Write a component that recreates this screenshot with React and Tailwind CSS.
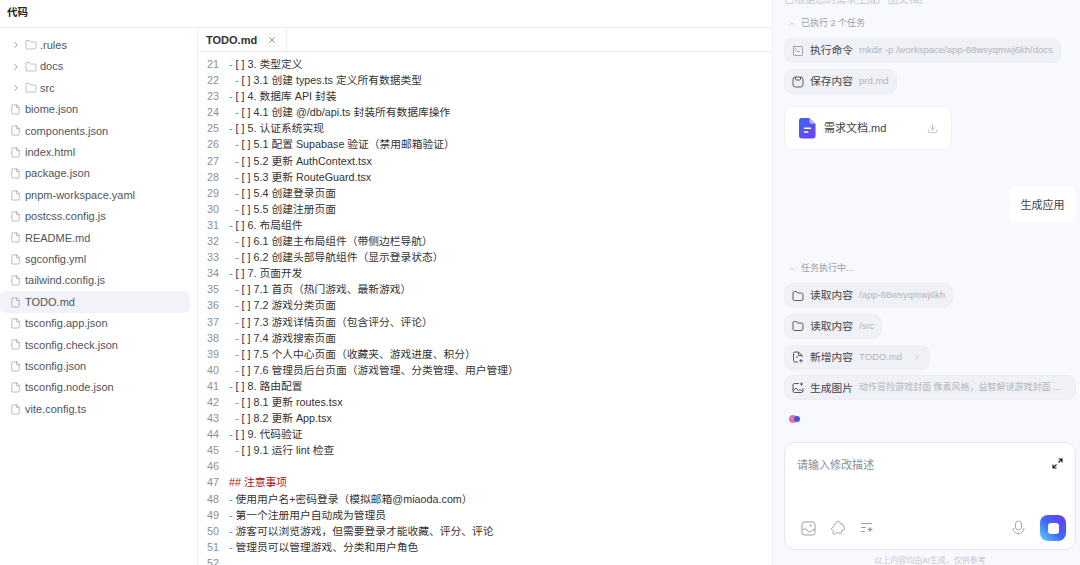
import React from 'react';
import { ChevronRight, ChevronUp, Folder, File, X, Download, SquareTerminal } from 'lucide-react';

const FONT = { fontFamily: '"Liberation Sans", "Noto Sans CJK SC", sans-serif' };

const folders = ['.rules', 'docs', 'src'];
const files = ['biome.json', 'components.json', 'index.html', 'package.json', 'pnpm-workspace.yaml', 'postcss.config.js', 'README.md', 'sgconfig.yml', 'tailwind.config.js', 'TODO.md', 'tsconfig.app.json', 'tsconfig.check.json', 'tsconfig.json', 'tsconfig.node.json', 'vite.config.ts'];

const lines = [
  [21, 1, '[ ] 3. 类型定义'],
  [22, 2, '[ ] 3.1 创建 types.ts 定义所有数据类型'],
  [23, 1, '[ ] 4. 数据库 API 封装'],
  [24, 2, '[ ] 4.1 创建 @/db/api.ts 封装所有数据库操作'],
  [25, 1, '[ ] 5. 认证系统实现'],
  [26, 2, '[ ] 5.1 配置 Supabase 验证（禁用邮箱验证）'],
  [27, 2, '[ ] 5.2 更新 AuthContext.tsx'],
  [28, 2, '[ ] 5.3 更新 RouteGuard.tsx'],
  [29, 2, '[ ] 5.4 创建登录页面'],
  [30, 2, '[ ] 5.5 创建注册页面'],
  [31, 1, '[ ] 6. 布局组件'],
  [32, 2, '[ ] 6.1 创建主布局组件（带侧边栏导航）'],
  [33, 2, '[ ] 6.2 创建头部导航组件（显示登录状态）'],
  [34, 1, '[ ] 7. 页面开发'],
  [35, 2, '[ ] 7.1 首页（热门游戏、最新游戏）'],
  [36, 2, '[ ] 7.2 游戏分类页面'],
  [37, 2, '[ ] 7.3 游戏详情页面（包含评分、评论）'],
  [38, 2, '[ ] 7.4 游戏搜索页面'],
  [39, 2, '[ ] 7.5 个人中心页面（收藏夹、游戏进度、积分）'],
  [40, 2, '[ ] 7.6 管理员后台页面（游戏管理、分类管理、用户管理）'],
  [41, 1, '[ ] 8. 路由配置'],
  [42, 2, '[ ] 8.1 更新 routes.tsx'],
  [43, 2, '[ ] 8.2 更新 App.tsx'],
  [44, 1, '[ ] 9. 代码验证'],
  [45, 2, '[ ] 9.1 运行 lint 检查'],
  [46, 0, ''],
  [47, 3, '## 注意事项'],
  [48, 1, '使用用户名+密码登录（模拟邮箱@miaoda.com）'],
  [49, 1, '第一个注册用户自动成为管理员'],
  [50, 1, '游客可以浏览游戏，但需要登录才能收藏、评分、评论'],
  [51, 1, '管理员可以管理游戏、分类和用户角色'],
];

// 小图标：lucide 里没有完全一样的
const SaveIcon = (p) => (
  <svg viewBox="0 0 12 12" fill="none" stroke="currentColor" strokeWidth="1" {...p}>
    <rect x="1" y="1" width="10" height="10" rx="2.500" />
    <path d="M3.500 1v2.200a.8.800 0 0 0 .8.800h3.400a.8.800 0 0 0 .8-.8V1" />
  </svg>
);
const FolderIcon = (p) => (
  <svg viewBox="0 0 12 12" fill="none" stroke="currentColor" strokeWidth="1" {...p}>
    <path d="M1 3a1.500 1.500 0 0 1 1.500-1.500h2L5.500 3h4A1.500 1.500 0 0 1 11 4.500v4.500a1.500 1.500 0 0 1-1.500 1.500h-7A1.500 1.500 0 0 1 1 9Z" />
  </svg>
);
const NewFileIcon = (p) => (
  <svg viewBox="0 0 12 12" fill="none" stroke="currentColor" strokeWidth="1" {...p}>
    <path d="M6 11H3a1.500 1.500 0 0 1-1.500-1.500v-7A1.500 1.500 0 0 1 3 1h3.500L10 4.500V6" />
    <path d="M6.500 1v3.500H10M4 6h2M9 8v3.500M7.300 9.700h3.400" />
  </svg>
);
const GenImageIcon = (p) => (
  <svg viewBox="0 0 12 12" fill="none" stroke="currentColor" strokeWidth="1" {...p}>
    <path d="M7 1.500H2.500A1.500 1.500 0 0 0 1 3v6a1.500 1.500 0 0 0 1.500 1.500h7A1.500 1.500 0 0 0 11 9V6" />
    <path d="M1 8.500 4 6l2.500 2.500L8 7.500l3 2" />
    <path d="M9.500.5v3M8 2h3" />
  </svg>
);

function CodeLine({ num, kind, text }) {
  return (
    <div className="flex h-[16.1px] items-center text-[10.75px] leading-[16.1px] text-[#333]">
      <span className="w-[22px] shrink-0 text-[#8b8f98]">{num}</span>
      {kind === 3 ? (
        <span className="whitespace-pre text-[#a31515]">{text}</span>
      ) : kind === 0 ? null : (
        <span className={`whitespace-pre ${kind === 2 ? 'pl-[6px]' : ''}`}>
          <span className="text-[#3a9fd6]">- </span>
          {text}
        </span>
      )}
    </div>
  );
}

function TaskPill({ icon: Icon, label, detail, children, wide, cjk }) {
  return (
    <div className={`flex h-[25px] shrink-0 items-center gap-[6px] rounded-[9px] border border-[#eceef3] bg-[#f0f1f6] pl-[7px] pr-[7px] ${wide ? 'self-stretch' : 'self-start'}`}>
      <Icon width={12} height={12} strokeWidth={1} className="shrink-0 text-[#555a66]" />
      <span className="shrink-0 text-[10.75px] text-[#3f434d]">{label}</span>
      <span className={`whitespace-pre ${cjk ? 'text-[9px]' : 'text-[9.5px]'} text-[#b1b5c1]`}>{detail}</span>
      {children}
    </div>
  );
}

export default function App() {
  return (
    <div className="flex h-[565px] w-[1080px] overflow-hidden bg-white" style={FONT}>
      <div className="flex w-[772px] shrink-0 flex-col">
        <header className="flex h-[28px] shrink-0 items-center border-b border-[#eceef2] pb-[2px] pl-[7px] text-[10.5px] font-bold text-[#222]">代码</header>
        <div className="flex min-h-0 flex-1">
          <aside className="w-[198px] shrink-0 border-r border-[#eceef2] pt-[6.5px]">
            {folders.map((name) => (
              <div key={name} className="flex h-[21.41px] items-center pl-[11px] text-[11px] text-[#50545e]">
                <ChevronRight size={10} strokeWidth={1.4} className="text-[#555]" />
                <Folder size={12} strokeWidth={1} className="ml-[4px] text-[#777c88]" />
                <span className="ml-[3px]">{name}</span>
              </div>
            ))}
            {files.map((name) => (
              <div key={name} className={`mr-[7px] flex h-[21.41px] items-center pl-[10px] text-[11px] text-[#50545e] ${name === 'TODO.md' ? 'rounded-[6px] bg-[#f2f3f9] text-[#333]' : ''}`}>
                <File size={11} strokeWidth={1.1} className="text-[#777c88]" />
                <span className="ml-[4px]">{name}</span>
              </div>
            ))}
          </aside>
          <main className="min-w-0 flex-1">
            <div className="flex h-[24px] border-b border-[#eceef2]">
              <div className="flex w-[89px] items-center border-r border-[#eceef2] pl-[8px] pt-[1px] text-[11px] font-bold text-[#333]">
                TODO.md
                <X size={10} strokeWidth={1.3} className="ml-[10px] text-[#444]" />
              </div>
            </div>
            <div className="h-[513px] overflow-hidden pl-[9px] pt-[4px]">
              {lines.map(([num, kind, text]) => (
                <CodeLine key={num} num={num} kind={kind} text={text} />
              ))}
              <div className="h-[10px] text-[10.75px] leading-[16.1px] text-[#8b8f98]">52</div>
            </div>
          </main>
        </div>
      </div>

      <div className="flex h-[565px] w-[308px] shrink-0 flex-col overflow-hidden border-l border-[#f0f1f5] bg-[#f8f9fd] pl-[11px] pr-[4px] [&>*]:shrink-0">
        <div className="h-[6px] overflow-hidden text-[10.4px] leading-[0px] text-[#c5c8d0]">已根据您的需求生成产品文档。</div>
        <div className="mt-[11px] flex h-[13px] items-center gap-[4px] pl-[3px] text-[9px] text-[#9a9eaa]">
          <ChevronUp size={10} strokeWidth={1.2} />
          已执行 2 个任务
        </div>
        <div className="mt-[8px] flex flex-col gap-[6px]">
          <TaskPill icon={SquareTerminal} label="执行命令" detail="mkdir -p /workspace/app-88wsyqmwj6kh/docs" />
          <TaskPill icon={SaveIcon} label="保存内容" detail="prd.md" />
        </div>
        <div className="mt-[12px] flex h-[44px] w-[168px] items-center rounded-[10px] border border-[#f0f1f5] bg-white pl-[14px] pr-[13px] pt-[1px]">
          <svg width="17" height="21" viewBox="0 0 18 22" className="shrink-0">
            <defs>
              <linearGradient id="doc" x1="0" y1="0" x2="0.6" y2="1">
                <stop offset="0" stopColor="#3a66f0" />
                <stop offset="1" stopColor="#6a45f2" />
              </linearGradient>
            </defs>
            <path d="M2.500 0H11l6.500 6v13a2.500 2.500 0 0 1-2.500 2.500H2.500A2.500 2.500 0 0 1 0 19V2.500A2.500 2.500 0 0 1 2.500 0Z" fill="url(#doc)" />
            <path d="M11 0l6.500 6H13a2 2 0 0 1-2-2Z" fill="#a9b8fa" />
            <rect x="5" y="10" width="8" height="1.600" rx="0.800" fill="#fff" />
            <rect x="5" y="14" width="5" height="1.600" rx="0.800" fill="#fff" />
          </svg>
          <span className="ml-[8px] flex-1 text-[11px] text-[#3b3f48]">需求文档.md</span>
          <Download size={11} strokeWidth={1.2} className="text-[#8e929d]" />
        </div>
        <div className="mt-[37px] flex h-[36px] w-[67px] items-center justify-center self-end rounded-[6px] bg-white text-[11px] text-[#3b3f48]">生成应用</div>
        <div className="mt-[39px] flex h-[13px] items-center gap-[4px] pl-[3px] text-[9px] text-[#9a9eaa]">
          <ChevronUp size={10} strokeWidth={1.2} />
          任务执行中...
        </div>
        <div className="mt-[8px] flex flex-col gap-[5.75px]">
          <TaskPill icon={FolderIcon} label="读取内容" detail="/app-88wsyqmwj6kh" />
          <TaskPill icon={FolderIcon} label="读取内容" detail="/src" />
          <TaskPill icon={NewFileIcon} label="新增内容" detail="TODO.md">
            <ChevronRight size={10} strokeWidth={1.2} className="ml-[4px] text-[#a5a9b5]" />
          </TaskPill>
          <TaskPill icon={GenImageIcon} label="生成图片" detail="动作冒险游戏封面 像素风格，益智解谜游戏封面 ..." wide cjk />
        </div>
        <div className="relative ml-[5px] mt-[15px] h-[8px] w-[11px]">
          <span className="absolute left-0 top-0 h-[8px] w-[8px] rounded-full bg-[#ee6fb0]" />
          <span className="absolute right-0 top-[1px] h-[6px] w-[6px] rounded-full bg-[#3f55d8]" />
        </div>
        <div className="mt-[19px] flex h-[108px] flex-col rounded-[11px] border border-[#e4e6ec] bg-white pl-[12px] pr-[9px]">
          <div className="mt-[14px] flex items-start justify-between">
            <span className="text-[11px] text-[#8a8e98]">请输入修改描述</span>
            <svg width="11" height="11" viewBox="0 0 11 11" fill="none" stroke="#222" strokeWidth="1.200" className="mr-[3px] mt-[1px]">
              <path d="M6.500 1H10v3.500M10 1 6.500 4.500M1 6.500V10h3.500M1 10l3.500-3.500" />
            </svg>
          </div>
          <div className="mb-[8px] mt-auto flex items-center">
            <svg width="15" height="15" viewBox="0 0 15 15" fill="none" stroke="#9a9da5" strokeWidth="1" className="ml-[4px]">
              <rect x="1" y="1" width="13" height="13" rx="2.500" />
              <path d="M1 9.500c2-2 3.500-2 5-.5s2 2 3.500 1.500 3-2 4.500-2.500" />
              <circle cx="9.500" cy="4.500" r="1" fill="#9a9da5" stroke="none" />
            </svg>
            <svg width="16" height="16" viewBox="0 0 16 16" fill="none" stroke="#9a9da5" strokeWidth="1" className="ml-[14px]">
              <path d="M7 1.500c1.500-.8 3 .2 3 1.700 0 .5 0 .8.800.8h1.200c1 0 1.300.6 1.200 1.500l-.2 1c1 .5 2 1.200 1.500 2.500-.4 1-1.300 1.300-2.300 1-.3 1.500-.5 3.500-2.200 3.500-1 0-1.500-1.200-2.500-1.200S5.500 14 4.500 14H3.500c-.8 0-1-.7-.5-1.300.5-.7 1-1.200.3-1.900-.7-.7-1.800-.8-1.800-2 0-1 1-1.300 1.800-1.800C4 6.500 4.500 6 4.300 5c-.2-1 1-1 1.700-1.500C6.600 3 6.300 2 7 1.500Z" />
            </svg>
            <svg width="14" height="14" viewBox="0 0 14 14" fill="none" stroke="#9a9da5" strokeWidth="1" className="ml-[14px]">
              <path d="M1 2.500h11M1 6.500h5M1 10.500h4" />
              <path d="M10 5.500l.9 2.100L13 8.500l-2.100.9L10 11.500l-.9-2.100L7 8.500l2.100-.9Z" fill="#9a9da5" stroke="none" />
            </svg>
            <svg width="15" height="16" viewBox="0 0 15 16" fill="none" stroke="#a5a8af" strokeWidth="1" className="ml-auto">
              <rect x="4.500" y="1" width="6" height="9" rx="3" />
              <path d="M2 8a5.500 5.500 0 0 0 11 0M7.500 13.500V15" />
            </svg>
            <div className="ml-[14px] flex h-[26px] w-[26px] items-center justify-center rounded-[8px] bg-[linear-gradient(45deg,#5fd6fa,#3f6cf3_45%,#6a36f5)]">
              <div className="h-[11px] w-[11px] rounded-[3px] bg-white" />
            </div>
          </div>
        </div>
        <div className="mt-[5px] text-center text-[8px] text-[#c4c7cf]">以上内容均由AI生成，仅供参考</div>
      </div>
    </div>
  );
}
